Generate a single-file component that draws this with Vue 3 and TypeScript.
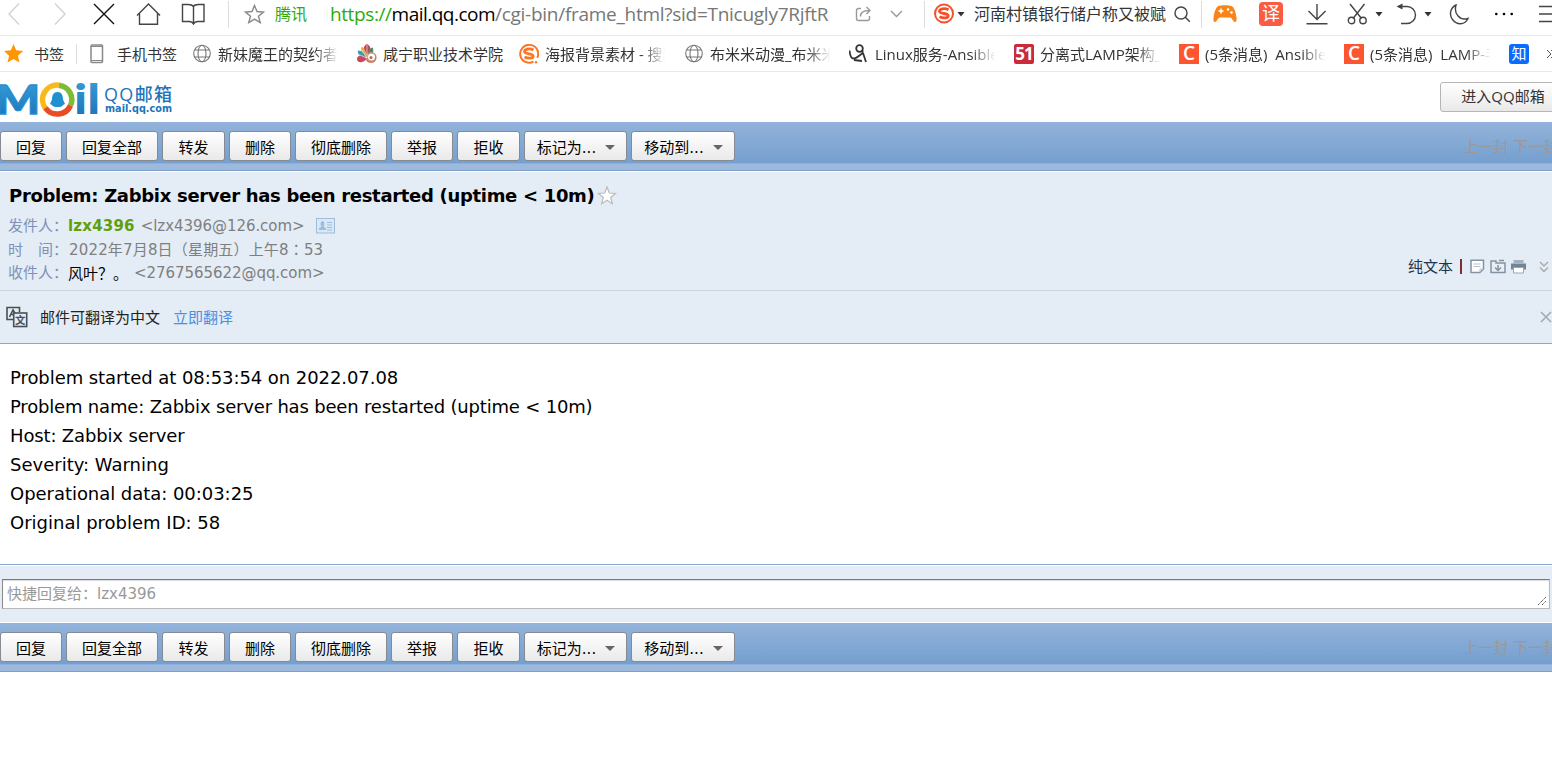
<template>
  <div class="page">
    <!-- 浏览器地址栏 -->
    <div class="nav-bar">
      <svg width="12" height="22" viewBox="0 0 12 22" class="line pale"><path d="M11 .5L1 11l10 10.500" /></svg>
      <svg width="12" height="22" viewBox="0 0 12 22" class="line pale"><path d="M1 .5L11 11 1 21.500" /></svg>
      <svg width="22" height="22" viewBox="0 0 22 22" class="line black"><path d="M1 1l20 20M21 1L1 21" /></svg>
      <svg width="25" height="22" viewBox="0 0 25 22" class="line"><path d="M1 12.500L12.500 1 24 12.500M3.500 10.500v10.700h18V10.500" /></svg>
      <svg width="24" height="22" viewBox="0 0 24 22" class="line"><path d="M12.500 3.500C11 1.500 9 1.500 7 1.500H1.500v17H8c2 0 3.500.5 4.500 2.500 1-2 2.500-2.500 4.500-2.500h6v-17h-5.500c-2 0-4 0-5 2zM12.500 3.500V20" /></svg>
      <i class="split"></i>
      <svg width="21" height="20" viewBox="0 0 21 20" class="line gray"><path d="M10.500 1.500l2.500 6 6.500.5-5 4.200 1.700 6.400-5.700-3.500-5.700 3.500 1.700-6.400L1.500 8 8 7.500z" /></svg>
      <span class="tencent">腾讯</span>
      <div class="url"><em>https://</em><b>mail.qq.com</b>/cgi-bin/frame_html?sid=Tnicugly7RjftR</div>
      <svg width="16" height="16" viewBox="0 0 16 16" class="line light"><path d="M6 2.500H3.500a2 2 0 0 0-2 2v8a2 2 0 0 0 2 2h9a2 2 0 0 0 2-2V10M5.500 10.500C5.500 6.500 8 4.500 14 4.500M11.500 1l3.500 3.500L11.500 8" /></svg>
      <svg width="13" height="8" viewBox="0 0 13 8" class="line light"><path d="M1 1l5.500 5.500L12 1" /></svg>
      <i class="split"></i>
      <svg width="22" height="22" viewBox="0 0 22 22"><circle cx="11" cy="10.500" r="9" class="sogou-ring" /><path d="M15.500 6.800C12 5 6.500 5.500 6.500 8.200c0 3 8.700 1.600 8.700 4.500 0 2.500-5 2.800-8.700 1" class="sogou-s" /></svg>
      <svg width="8" height="5" viewBox="0 0 8 5"><path d="M.5 0h7L4 4.500z" fill="#333" /></svg>
      <div class="query">河南村镇银行储户称又被赋</div>
      <svg width="17" height="17" viewBox="0 0 17 17" class="line"><circle cx="7" cy="7" r="6" /><path d="M11.300 11.300l4.500 4.500" /></svg>
      <i class="split"></i>
      <svg width="24" height="18" viewBox="0 0 24 18" class="pad">
        <path d="M5.500 1C8 0 16 0 18.500 1c2.500.8 4 5.500 4.900 11 .5 3 .2 5-1.500 5-2 0-2.500-4.500-5-4.500H7.100c-2.500 0-3 4.500-5 4.500-1.700 0-2-2-1.500-5C1.500 6.500 3 1.800 5.500 1z" fill="#f98418" />
        <path d="M8 3.500v5M5.500 6h5" stroke="#fff" stroke-width="1.700" />
        <circle cx="15" cy="4.500" r="1.300" fill="#fff" /><circle cx="18.500" cy="7.500" r="1.300" fill="#fff" />
      </svg>
      <span class="yi">译</span>
      <svg width="22" height="22" viewBox="0 0 22 22" class="line"><path d="M11 1v15M2.500 8l8.500 8.500L19.500 8M.5 20.800h21" /></svg>
      <svg width="21" height="22" viewBox="0 0 21 22" class="line"><path d="M3 1l11.500 14.500M17.500 1L6 15.500" /><circle cx="4.500" cy="17.500" r="3.200" /><circle cx="16" cy="17.500" r="3.200" /></svg>
      <svg width="8" height="5" viewBox="0 0 8 5"><path d="M.5 0h7L4 4.500z" fill="#333" /></svg>
      <svg width="21" height="22" viewBox="0 0 21 22" class="line"><path d="M3 3.500h8a8.500 8.500 0 0 1 0 17H5" /><path d="M6.500 .5v6L.5 3.500z" fill="#444" stroke="none" /></svg>
      <svg width="8" height="5" viewBox="0 0 8 5"><path d="M.5 0h7L4 4.500z" fill="#333" /></svg>
      <svg width="21" height="21" viewBox="0 0 21 21" class="line"><path d="M7 1C1 4 0 11 3.500 15.500 8 21.500 16 21 19 14.500 11 17 4.500 10 7 1z" /></svg>
      <svg width="20" height="4" viewBox="0 0 20 4"><circle cx="2.300" cy="2" r="1.300" /><circle cx="10" cy="2" r="1.300" /><circle cx="17.700" cy="2" r="1.300" /></svg>
      <svg width="20" height="18" viewBox="0 0 20 18" class="line"><path d="M1 1.500h19M1 9h19M1 16.500h19" /></svg>
    </div>

    <!-- 书签栏 -->
    <div class="book-bar">
      <svg class="fav" width="20" height="20" viewBox="0 0 20 20"><path d="M9.500 0l2.700 6.300 7 .7-5.300 4.700 1.600 6.800-6-3.600-6 3.600 1.600-6.800L0 7l6.900-.7z" fill="#ff9500" /></svg>
      <span class="fav-text">书签</span>
      <i class="split"></i>
      <svg class="phone" width="14" height="20" viewBox="0 0 14 20"><rect x="1" y="1" width="11.500" height="17.500" rx="1" fill="#fff" stroke="#888" stroke-width="1.500" /><path d="M1 2.500h11M1 16.500h11" stroke="#888" /></svg>
      <span class="phone-text">手机书签</span>
      <div v-for="(mark, i) in bookmarks" :key="i" class="mark" :class="mark.icon + '-mark'">
        <svg v-if="mark.icon === 'globe'" width="20" height="20" viewBox="0 0 20 20" class="line globe"><circle cx="10" cy="9.500" r="8.300" /><ellipse cx="10" cy="9.500" rx="4" ry="8.300" /><path d="M2.500 6h15M2.500 13h15" /></svg>
        <svg v-else-if="mark.icon === 'shell'" width="20" height="20" viewBox="0 0 20 20">
          <path d="M10 14C5 9 5.500 2 10 0c4.500 2 5 8 0 14z" fill="#c0464f" />
          <path d="M10 14C5 13 2.500 7 4.500 3c3 .5 5 5 5.500 11z" fill="#ddb057" />
          <path d="M10 14C5 15 0 11 1 6.500c4 0 7 3 9 7.500z" fill="#3c9daa" />
          <path d="M10 14C7 19.500 0 19.500 0 15c0-4 6-4 10-1z" fill="#c9475d" />
          <path d="M10 14c0-5 2-10 5.500-10.500C17.500 7 16 11 10 14z" fill="#498a72" />
          <circle cx="14" cy="13.500" r="5.600" fill="#c78567" /><circle cx="14.500" cy="13" r="3.500" fill="#fff" /><circle cx="14" cy="13.500" r="1.600" fill="#b86c5e" />
          <path d="M10 14L3.500 4.500M10 14L1.500 10.500M10 14V1" stroke="#fff" stroke-width=".6" />
        </svg>
        <svg v-else-if="mark.icon === 'sogou'" width="20" height="20" viewBox="0 0 20 20" class="orange"><path d="M14.500 17.700a9 9 0 1 1 3.800-4" class="sogou-ring" /><path d="M14.500 6C11 4.200 5.500 4.800 5.500 7.500c0 3 8.700 1.600 8.700 4.500 0 2.500-5 2.800-8.700 1" class="sogou-s" /><circle cx="17" cy="18.300" r="1.200" fill="#fb7622" /></svg>
        <svg v-else-if="mark.icon === 'figure'" width="20" height="20" viewBox="0 0 20 20" class="figure"><circle cx="10.500" cy="4.500" r="3.300" /><path d="M.5 6.500c.5 4.500 1.500 8 4 8 3 0 6-3.500 9.500-5.500M13.500 6v4.500M14 9l3 9M5 16l8 1" /></svg>
        <span v-else class="site" :class="mark.icon">{{ mark.mark }}</span>
        <span class="mark-text" :class="{ faded: mark.faded }">{{ mark.title }}</span>
      </div>
      <span class="site zhi">知</span>
      <svg class="more" width="8" height="10" viewBox="0 0 8 10"><path d="M1 1l4 4-4 4M5 1l4 4-4 4" fill="none" stroke="#555" /></svg>
    </div>

    <!-- 邮箱头部 -->
    <header class="mail-head">
      <svg width="176" height="40" viewBox="0 0 176 40" class="logo">
        <defs>
          <linearGradient id="blue" x1="0" y1="0" x2="0" y2="1"><stop offset="0" stop-color="#3ba4dc" /><stop offset="1" stop-color="#176fb8" /></linearGradient>
        </defs>
        <text x="-4" y="31.500" font-size="40" textLength="44" lengthAdjust="spacingAndGlyphs" class="logo-m thick">M</text>
        <path d="M46 27A14.500 14.500 0 0 1 59 3.200" stroke="#fbb81b" stroke-width="5.500" fill="none" />
        <path d="M59 3.200A14.500 14.500 0 0 1 70.500 23.500" stroke="#7dbd35" stroke-width="5.500" fill="none" />
        <path d="M70.500 23.500A14.500 14.500 0 0 1 45.500 26" stroke="#e94b24" stroke-width="5.500" fill="none" />
        <path d="M57.500 10c4 0 5.500 3.500 5.500 7.500l2 4.500-2 1c-.5 1.500-2 2-5.500 2s-5-.5-5.500-2l-2-1 2-4.500c0-4 1.500-7.500 5.500-7.500z" fill="#1f91cf" />
        <text x="74" y="31.500" font-size="42" textLength="26" lengthAdjust="spacingAndGlyphs" class="logo-m">il</text>
        <text x="104" y="18.500" font-size="18" textLength="68" class="logo-qq">QQ邮箱</text>
        <text x="105" y="30" font-size="10" textLength="67" lengthAdjust="spacingAndGlyphs" class="logo-url">mail.qq.com</text>
      </svg>
      <button class="enter">进入QQ邮箱</button>
    </header>

    <div class="toolbar">
      <button v-for="btn in buttons" :key="btn.text" :style="{ width: btn.width + 'px' }">
        {{ btn.text }}<i v-if="btn.menu" class="arrow"></i>
      </button>
      <span class="pager">上一封 下一封</span>
    </div>

    <!-- 邮件信息 -->
    <section class="info">
      <h1><span>Problem: Zabbix server has been restarted (uptime &lt; 10m)</span>
        <svg width="20" height="19" viewBox="0 0 20 19"><path d="M10 1l2.300 6 6.200.5-4.800 4 1.600 6.200L10 14.300l-5.300 3.400 1.600-6.200-4.800-4L7.700 7z" fill="#fff" stroke="#bbb" stroke-width="1.200" /></svg>
      </h1>
      <p><label>发件人：</label><b class="sender">lzx4396</b><span class="addr">&lt;lzx4396@126.com&gt;</span>
        <svg class="card" width="19" height="16" viewBox="0 0 19 16"><rect x=".5" y=".5" width="18" height="14.500" fill="#d9e8f6" stroke="#9fbddb" /><path d="M3 12v-2l2.500-1.300C4 7 4.500 3 6.500 3s2.500 4 1 5.700L10 10v2z" fill="#9fbddb" /><path d="M11 4.500h5M11 7h5M11 9.500h5M11 12h5" stroke="#9fbddb" /></svg>
      </p>
      <p><label>时　间：</label><span class="date">2022年7月8日（星期五）上午8<i>：</i>53</span></p>
      <div class="last-row">
        <p><label>收件人：</label><span class="to">风叶？。</span><span class="addr to-addr">&lt;2767565622@qq.com&gt;</span></p>
        <div class="tools">
          <span>纯文本</span><i></i>
          <svg width="15" height="15" viewBox="0 0 15 15"><path d="M1 1.200h12.500V10L10 13.500H1z" fill="#fff" stroke="#8493a3" stroke-width="1.500" /><path d="M3.500 5h7M3.500 7.500h7M10 13.500V10h3.500" stroke="#b4bfca" fill="none" /></svg>
          <svg width="16" height="15" viewBox="0 0 16 15"><path d="M1 2h5v2h9v9.500H1z" fill="#e8eef4" stroke="#8493a3" stroke-width="1.500" /><path d="M9 1.500h5M8 6v5M5 8.500l3 3 3-3" stroke="#8493a3" stroke-width="1.500" fill="none" /></svg>
          <svg width="15" height="15" viewBox="0 0 15 15"><path d="M2.500 1h10v3h-10z" fill="#a5b0bb" /><path d="M0 4.500h15v6H0z" fill="#718394" /><path d="M2.500 8.500h10V14h-10z" fill="#fff" stroke="#98a6b4" /></svg>
          <svg width="10" height="12" viewBox="0 0 10 12"><path d="M1 1l4 4 4-4M1 6.500l4 4 4-4" stroke="#aaa" stroke-width="1.400" fill="none" /></svg>
        </div>
      </div>
    </section>

    <div class="translate">
      <svg width="22" height="22" viewBox="0 0 22 22"><path d="M7 13.500H1v-12h12.500V6" fill="none" stroke="#4a4f55" stroke-width="1.600" /><path d="M3.500 11l3.500-7 2.500 4M5 8.500h3" fill="none" stroke="#4a4f55" stroke-width="1.600" /><rect x="7.700" y="7" width="13" height="13.500" fill="#e4ecf5" stroke="#4a4f55" stroke-width="1.600" /><text x="9" y="17.500" font-size="10.500" class="wen">文</text></svg>
      <span>邮件可翻译为中文</span><a>立即翻译</a>
      <svg class="close" width="12" height="12" viewBox="0 0 12 12"><path d="M1 1l10 10M11 1L1 11" stroke="#9eabb8" stroke-width="1.600" /></svg>
    </div>

    <main class="content">
      <div v-for="line in lines" :key="line">{{ line }}</div>
    </main>

    <div class="reply">
      <div class="reply-box">
        快捷回复给：lzx4396
        <svg width="10" height="10" viewBox="0 0 10 10"><path d="M1 9l8-8M5 9l4-4" stroke="#555" stroke-dasharray="1.400 .6" /></svg>
      </div>
    </div>

    <div class="toolbar bottom">
      <button v-for="btn in buttons" :key="btn.text" :style="{ width: btn.width + 'px' }">
        {{ btn.text }}<i v-if="btn.menu" class="arrow"></i>
      </button>
      <span class="pager">上一封 下一封</span>
    </div>
  </div>
</template>

<script setup lang="ts">
interface Bookmark {
  icon: string
  title: string
  mark?: string
  faded?: boolean
}

interface ToolButton {
  text: string
  width: number
  menu?: boolean
}

const bookmarks: Bookmark[] = [
  { icon: 'globe', title: '新妹魔王的契约者:', faded: true },
  { icon: 'shell', title: '咸宁职业技术学院' },
  { icon: 'sogou', title: '海报背景素材 - 搜狗', faded: true },
  { icon: 'globe', title: '布米米动漫_布米米', faded: true },
  { icon: 'figure', title: 'Linux服务-Ansible', faded: true },
  { icon: 'five', mark: '51', title: '分离式LAMP架构_', faded: true },
  { icon: 'csdn', mark: 'C', title: '(5条消息) Ansible', faded: true },
  { icon: 'csdn', mark: 'C', title: '(5条消息) LAMP-手', faded: true },
]

const buttons: ToolButton[] = [
  { text: '回复', width: 62 },
  { text: '回复全部', width: 92 },
  { text: '转发', width: 63 },
  { text: '删除', width: 62 },
  { text: '彻底删除', width: 92 },
  { text: '举报', width: 62 },
  { text: '拒收', width: 63 },
  { text: '标记为...', width: 103, menu: true },
  { text: '移动到...', width: 104, menu: true },
]

const lines = [
  'Problem started at 08:53:54 on 2022.07.08',
  'Problem name: Zabbix server has been restarted (uptime < 10m)',
  'Host: Zabbix server',
  'Severity: Warning',
  'Operational data: 00:03:25',
  'Original problem ID: 58',
]
</script>

<style>
body {
  background: #fff;
}
</style>

<style scoped>
.page {
  height: 758px;
  overflow: hidden;
  background: #fff;
  font-family: 'DejaVu Sans', 'Noto Sans CJK SC', sans-serif;
  font-size: 15px;
  color: #000;
}

.page * {
  box-sizing: border-box;
}

svg {
  display: block;
  flex: none;
}

.line {
  fill: none;
  stroke: #444;
  stroke-width: 1.4;
}

.line.pale { stroke: #d2d2d2; }
.line.black { stroke: #111; }
.line.gray { stroke: #888; }
.line.light { stroke: #999; }
.line.globe { stroke: #777; stroke-width: 1.1; }

.figure {
  fill: none;
  stroke: #333;
  stroke-width: 1.8;
}

/* 地址栏 */
.nav-bar {
  display: grid;
  grid-template-columns: 46px 39px 43px 45px 47px 16px 31px 55px 525px 35px 34px 9px 24px 17px 200px 27px 12px 45px 48px 41px 28px 21px 28px 25px 45px 44px 14px;
  align-items: center;
  height: 36px;
  padding: 0 0 8px 8px;
  border-bottom: 1px solid #e9e9e9;
  font-family: 'Open Sans', 'Noto Sans CJK SC', sans-serif;
}

.split {
  width: 1px;
  height: 27px;
  background: #ddd;
}

.tencent {
  font-size: 16px;
  line-height: 28px;
  color: #2eab0a;
}

.url {
  width: 500px;
  overflow: hidden;
  white-space: nowrap;
  font-size: 19px;
  line-height: 28px;
  letter-spacing: -0.27px;
  color: #777;
}

.url em {
  font-style: normal;
  letter-spacing: -0.4px;
  color: #2eab0a;
}

.url b {
  font-weight: 400;
  letter-spacing: -0.52px;
  color: #000;
}

.query {
  width: 192px;
  overflow: hidden;
  white-space: nowrap;
  font-size: 16px;
  line-height: 28px;
  color: #333;
}

.sogou-ring {
  fill: none;
  stroke: #f4502a;
  stroke-width: 2;
}

.sogou-s {
  fill: none;
  stroke: #f4502a;
  stroke-width: 2.8;
}

.orange .sogou-ring,
.orange .sogou-s {
  stroke: #fb7622;
}

.yi {
  width: 24px;
  height: 24px;
  margin-left: 1px;
  border-radius: 4px;
  background: #fb5b40;
  color: #fff;
  font-size: 18px;
  line-height: 23px;
  text-align: center;
}

/* 书签栏 */
.book-bar {
  display: flex;
  align-items: center;
  height: 36px;
  padding-left: 4px;
  border-bottom: 1px solid #e9e9e9;
  font-family: 'Open Sans', 'Noto Sans CJK SC', sans-serif;
  color: #333;
  white-space: nowrap;
}

.book-bar .split { height: 20px; flex: none; }
.fav-text { flex: none; width: 42px; margin-left: 10px; }
.phone { margin-left: 13px; }
.phone-text { flex: none; width: 75px; margin-left: 13px; }

.mark {
  display: flex;
  align-items: center;
  flex: none;
  gap: 6px;
  width: 165px;
}

.shell-mark { width: 162px; }
.csdn-mark { word-spacing: 4px; }

.mark-text {
  width: 123px;
  overflow: hidden;
}

.faded {
  -webkit-mask-image: linear-gradient(90deg, #000 78%, transparent 98%);
  mask-image: linear-gradient(90deg, #000 78%, transparent 98%);
}

.site {
  flex: none;
  width: 20px;
  height: 20px;
  color: #fff;
  text-align: center;
  line-height: 19px;
}

.five {
  border-radius: 2px;
  background: #c92b3a;
  font-size: 17px;
  font-weight: 700;
  letter-spacing: -1px;
}

.csdn {
  background: #fc5531;
  font-size: 19px;
  font-weight: 600;
}

.zhi {
  border-radius: 3px;
  background: #0a6cff;
  font-size: 15px;
}

.more { margin-left: 17px; }

/* 邮箱头部 */
.mail-head {
  display: flex;
  justify-content: space-between;
  height: 50px;
  padding-top: 10px;
}

.logo-m {
  font-family: Lato, sans-serif;
  font-weight: 900;
  fill: url(#blue);
}

.thick {
  stroke: #2b8bcd;
  stroke-width: 1.3;
}

.logo-qq {
  font-family: 'Open Sans', 'Noto Sans CJK SC', sans-serif;
  font-weight: 500;
  fill: #1c74bc;
}

.logo-url {
  font-family: 'DejaVu Sans', sans-serif;
  font-weight: 700;
  fill: #1c74bc;
}

button {
  padding: 0;
  font-family: inherit;
  font-size: 15px;
  white-space: nowrap;
  background: linear-gradient(#fff, #e9e9e9);
  border: 1px solid #868b92;
  border-radius: 3px;
}

.enter {
  width: 126px;
  height: 30px;
  margin-right: -14px;
  padding-bottom: 3px;
  border-color: #b5b5b5;
  color: #333;
  font-family: 'Open Sans', 'Noto Sans CJK SC', sans-serif;
}

/* 工具栏 */
.toolbar {
  display: flex;
  gap: 4px;
  height: 50px;
  padding-top: 9px;
  border-bottom: 1px solid #fff;
  background: linear-gradient(#93b3da, #759fcf) 0 0 / 100% 41px no-repeat, linear-gradient(#8fb0db 0 1px, #9db9de 1px 7px, #7f9fc9 7px 8px) 0 41px / 100% 8px no-repeat;
}

.toolbar button {
  display: flex;
  align-items: center;
  justify-content: center;
  flex: none;
  height: 30px;
  color: #000;
}

.arrow {
  margin: 2px -1px 0 9px;
  border: 5px solid transparent;
  border-top-color: #666;
  border-bottom: 0;
}

.pager {
  margin-left: auto;
  margin-right: -6px;
  line-height: 32px;
  color: #999;
  white-space: nowrap;
}

/* 邮件信息 */
.info {
  height: 119px;
  padding: 10px 0 0 8px;
  border-bottom: 1px solid #c8d3e0;
  background: #e4ecf5;
}

.info h1 {
  display: flex;
  gap: 3px;
  align-items: center;
  margin: 0 0 5px 1px;
  font-size: 18px;
  line-height: 27px;
  letter-spacing: -0.31px;
}

.info p {
  display: flex;
  align-items: center;
  height: 23.5px;
  margin: 0;
  white-space: nowrap;
}

.info label {
  width: 60px;
  margin-top: -2px;
  color: #7e92b8;
}

.sender { color: #5e9f0d; letter-spacing: 0.2px; }
.addr { margin-left: 6px; color: #7f7f7f; letter-spacing: -0.05px; }
.card { margin-left: 11px; }

.date {
  margin: -2px 0 0 1px;
  color: #7f7f7f;
  letter-spacing: 0.17px;
}

.date i {
  font-style: normal;
  font-family: 'Noto Sans CJK TC', sans-serif;
}

.last-row {
  display: flex;
  justify-content: space-between;
}

.to { margin-top: -1px; }

.tools {
  display: flex;
  align-items: center;
  gap: 6px;
  height: 23px;
  margin: -6px 3px 0 0;
  color: #1c3550;
}

.tools span { margin-top: -3px; }

.tools i {
  width: 2px;
  height: 15px;
  margin: -1px 2px 0 1px;
  background: #862b35;
}

.tools svg + svg { margin-left: -1px; }
.tools svg:last-child { margin-left: 7px; }

.translate {
  display: flex;
  align-items: center;
  height: 53px;
  padding-left: 6px;
  border-bottom: 1px solid #8aa8cd;
  background: #e4ecf5;
  color: #222;
}

.translate span { margin: -2px 0 0 12px; }
.translate a { margin: -2px 0 0 13px; color: #4a90e2; }
.close { margin-left: auto; }
.wen { font-weight: 700; fill: #4a4f55; }

.content {
  height: 220px;
  padding: 19px 10px 0;
  font-size: 18px;
  line-height: 29px;
}

.content div:nth-child(1) { letter-spacing: -0.07px; }
.content div:nth-child(2) { letter-spacing: -0.18px; }
.content div:nth-child(3) { letter-spacing: -0.15px; }
.content div:nth-child(5) { letter-spacing: -0.04px; }

/* 快捷回复 */
.reply {
  height: 59px;
  padding: 14px 2px 0;
  border-top: 1px solid #8aa8cd;
  border-bottom: 1px solid #fff;
  background: #e4ecf5;
  box-shadow: inset 0 1px #fff;
}

.reply-box {
  display: flex;
  justify-content: space-between;
  height: 30px;
  padding: 0 2px 0 4px;
  border: 1px solid;
  border-color: #7a7a7a #b9b9b9 #b9b9b9 #8a8a8a;
  background: #fff;
  box-shadow: inset 0 1px 1px #ddd;
  line-height: 29px;
  color: #999;
}

.reply-box svg {
  align-self: flex-end;
  margin-bottom: 2px;
}
</style>
